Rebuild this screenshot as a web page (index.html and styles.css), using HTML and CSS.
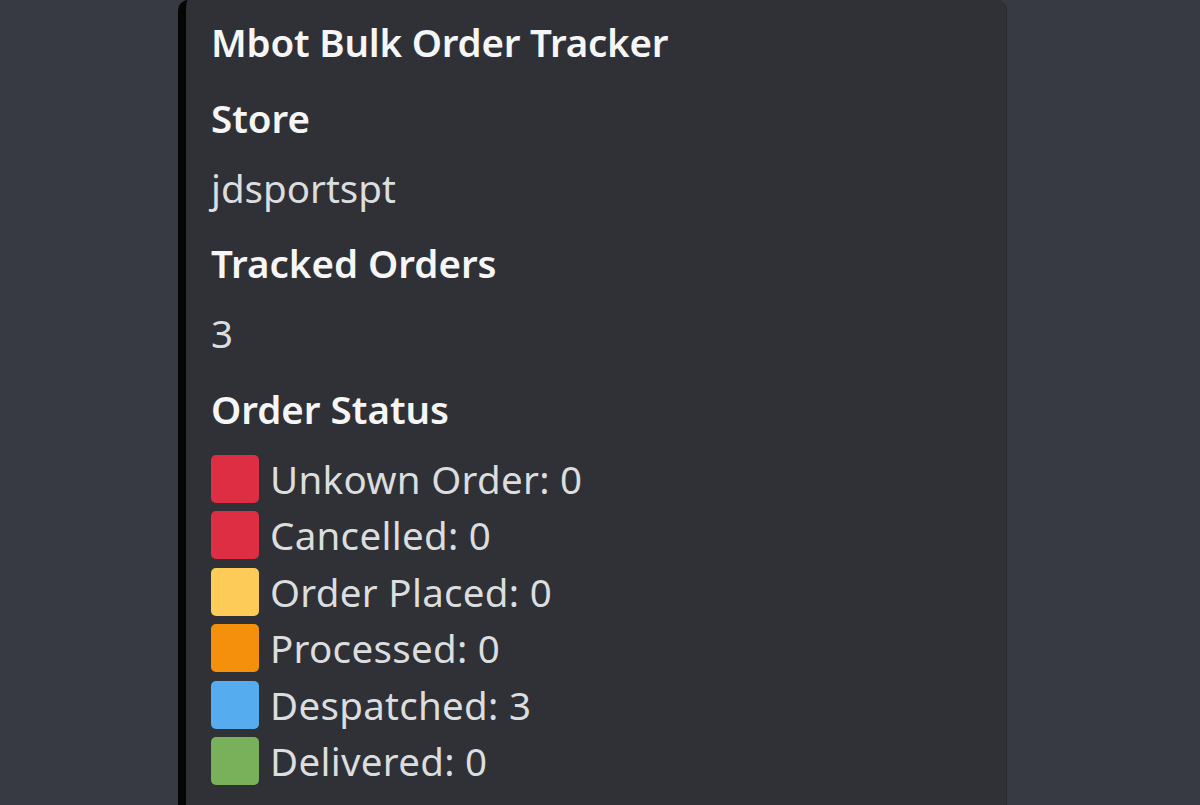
FILE: index.html
```html
<!DOCTYPE html>
<html lang="en">
<head>
<meta charset="utf-8">
<title>Mbot Bulk Order Tracker</title>
<link rel="stylesheet" href="styles.css">
</head>
<body>
<div class="page">
  <div class="embed">
    <div class="embed-body">
      <div class="embed-title">Mbot Bulk Order Tracker</div>
      <div class="field">
        <div class="field-name">Store</div>
        <div class="field-value">jdsportspt</div>
      </div>
      <div class="field">
        <div class="field-name">Tracked Orders</div>
        <div class="field-value">3</div>
      </div>
      <div class="field">
        <div class="field-name">Order Status</div>
        <div class="status-list">
          <div class="status-row"><span class="sq sq-red"></span><span class="status-text">Unkown Order: 0</span></div>
          <div class="status-row"><span class="sq sq-red"></span><span class="status-text">Cancelled: 0</span></div>
          <div class="status-row"><span class="sq sq-yellow"></span><span class="status-text">Order Placed: 0</span></div>
          <div class="status-row"><span class="sq sq-orange"></span><span class="status-text">Processed: 0</span></div>
          <div class="status-row"><span class="sq sq-blue"></span><span class="status-text">Despatched: 3</span></div>
          <div class="status-row"><span class="sq sq-green"></span><span class="status-text">Delivered: 0</span></div>
        </div>
      </div>
    </div>
  </div>
</div>
</body>
</html>
```

FILE: styles.css
```css
html, body {
  margin: 0;
  padding: 0;
  background: #373a42;
  height: 100%;
  overflow: hidden;
}

.page {
  height: 100%;
  padding-left: 178px;
  font-family: "Noto Sans", "Open Sans", sans-serif;
  font-size: 38.5px;
}

.embed {
  box-sizing: border-box;
  width: 829px;
  height: 100%;
  background: #2f3136;
  border-left: 8px solid #050505;
  border-right: 1px solid #2a2b30;
  border-radius: 10px 10px 0 0;
}

.embed-body {
  padding: 14px 0 0 25px;
  display: flex;
  flex-direction: column;
  gap: 19px;
}

.embed-title {
  color: #f6f6f7;
  font-weight: 600;
  line-height: 56.5px;
  letter-spacing: -0.2px;
}

.field {
  display: flex;
  flex-direction: column;
  gap: 13.5px;
}

.field-name {
  color: #f6f6f7;
  font-weight: 600;
  line-height: 56.5px;
}

.field-value {
  color: #dcddde;
  line-height: 56.5px;
}

.status-list {
  display: flex;
  flex-direction: column;
}

.status-row {
  display: flex;
  align-items: center;
  height: 56.5px;
  gap: 11px;
  color: #dcddde;
  letter-spacing: 0.3px;
}

.sq {
  width: 48px;
  height: 48px;
  border-radius: 5px;
  flex: none;
}

.sq-red { background: #dd2e44; }
.sq-yellow { background: #fdcb58; }
.sq-orange { background: #f4900c; }
.sq-blue { background: #55acee; }
.sq-green { background: #78b159; }
```
